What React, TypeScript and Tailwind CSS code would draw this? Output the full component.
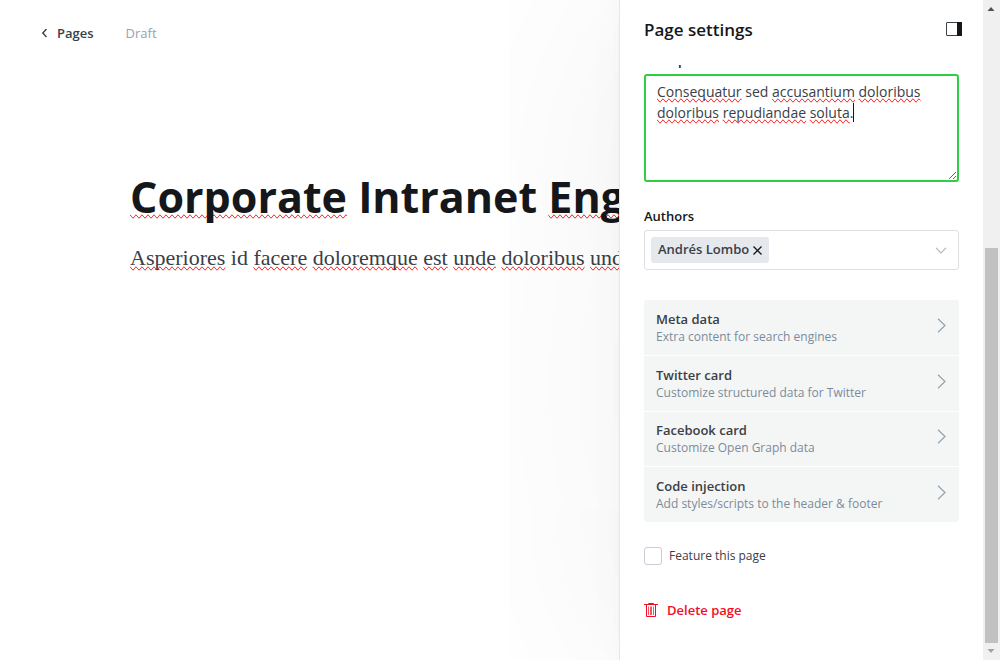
import { useState } from 'react';
import type { ReactNode } from 'react';

const cards = [
  { title: 'Meta data', text: 'Extra content for search engines' },
  { title: 'Twitter card', text: 'Customize structured data for Twitter' },
  { title: 'Facebook card', text: 'Customize Open Graph data' },
  { title: 'Code injection', text: 'Add styles/scripts to the header & footer' },
];

function Misspelt({ children }: { children: ReactNode }) {
  return <span className="[text-decoration-line:spelling-error]">{children}</span>;
}

function Marked({ text, known }: { text: string; known: string[] }) {
  return (
    <>
      {text.split(' ').map((word, i) => (
        <span key={i}>
          {i > 0 && ' '}
          {known.includes(word) ? word : <Misspelt>{word.replace('.', '')}</Misspelt>}
          {!known.includes(word) && word.endsWith('.') && '.'}
        </span>
      ))}
    </>
  );
}

function Scrollbar() {
  return (
    <div aria-hidden="true" className="flex w-[17px] shrink-0 flex-col items-center bg-[#f0f0f0] pr-px">
      <svg className="h-[17px] w-4" viewBox="0 0 16 17">
        <path d="M4.500 11 L8 7 L11.500 11 Z" fill="#505050" />
      </svg>
      <div className="flex w-full flex-1 flex-col pl-px">
        <div className="flex-[231]" />
        <div className="ml-px w-[13px] flex-[395] bg-[#c1c1c1]" />
      </div>
      <svg className="h-[17px] w-4" viewBox="0 0 16 17">
        <path d="M4.500 6 L8 10 L11.500 6 Z" fill="#a3a3a3" />
      </svg>
    </div>
  );
}

export default function App() {
  const [excerpt, setExcerpt] = useState('Consequatur sed accusantium doloribus doloribus repudiandae soluta.');
  const [featured, setFeatured] = useState(false);

  return (
    <div className="flex h-screen overflow-hidden bg-white font-['Open_Sans',sans-serif] text-[#394047]">
      <main className="min-w-0 flex-1 overflow-hidden whitespace-nowrap">
        <header className="flex h-[67px] items-center pl-10 text-[13px]">
          <a href="#pages" className="flex items-center gap-2 font-semibold">
            <svg className="h-[9px] w-[9px]" viewBox="0 0 9 9" fill="none" stroke="#394047" strokeWidth="1.4">
              <path d="M6.500 0 L2.800 4 L6.500 8" />
            </svg>
            Pages
          </a>
          <span className="ml-8 text-[#95a1ad]">Draft</span>
        </header>
        <div className="pt-[101px] pl-[130px]">
          <h1 className="text-[43px] leading-[58px] font-bold text-[#15171a]">
            <Marked text="Corporate Intranet Eng" known={['Intranet']} />
          </h1>
          <p className="mt-4 font-['Liberation_Serif',serif] text-[22px] leading-8">
            <Marked text="Asperiores id facere doloremque est unde doloribus unde" known={['id']} />
          </p>
        </div>
      </main>

      <aside className="z-10 flex w-[381px] shrink-0 border-l border-[#e5e6e8] bg-white shadow-[0_0_12px_rgba(0,0,0,0.02),0_0_50px_rgba(0,0,0,0.02),0_0_240px_rgba(0,0,0,0.065)]">
        <div className="flex min-w-0 flex-1 flex-col pr-6 pl-6">
          <div className="flex h-[65px] shrink-0 items-start justify-between pt-[17px]">
            <h2 className="text-[17px] leading-[26px] font-semibold text-[#15171a]">Page settings</h2>
            <button type="button" aria-label="Toggle settings" className="mt-[5px] -mr-[3px]">
              <svg className="h-[14px] w-4" viewBox="0 0 16 14">
                <rect x="0.500" y="0.500" width="15" height="13" rx="0.500" fill="none" stroke="#394047" />
                <rect x="11" y="0" width="5" height="14" rx="0.500" fill="#15171a" />
              </svg>
            </button>
          </div>
          <div className="min-h-0 flex-1 overflow-hidden">
            <form className="-mt-[15px]">
              <label htmlFor="excerpt" className="block h-6 text-[13px] leading-5 font-semibold text-[#15171a]">
                Excerpt
              </label>
              <div className="grid h-[108px]">
                <div
                  aria-hidden="true"
                  className="col-start-1 row-start-1 border-2 border-transparent px-[11px] py-[5px] text-[14px] leading-[21px] text-transparent"
                >
                  <Marked text={excerpt} known={['sed', '']} />
                  <span className="border-r border-[#15171a]" />
                </div>
                <textarea
                  id="excerpt"
                  spellCheck={false}
                  value={excerpt}
                  onChange={(e) => setExcerpt(e.target.value)}
                  className="col-start-1 row-start-1 resize rounded-[3px] border-2 border-[#30cf43] bg-transparent px-[11px] py-[5px] text-[14px] leading-[21px] outline-none"
                />
              </div>

              <div id="authors" className="mt-6 text-[13px] leading-5 font-semibold text-[#15171a]">
                Authors
              </div>
              <div
                role="group"
                aria-labelledby="authors"
                className="mt-1 flex h-10 items-center justify-between rounded-[3px] border border-[#dddfe2] pr-[11px] pl-[6px]"
              >
                <span className="flex h-[26px] items-center gap-1 rounded-[3px] bg-[#e5e9ed] px-[7px] text-[13px] font-semibold">
                  Andrés Lombo
                  <button type="button" aria-label="Remove Andrés Lombo">
                    <svg className="h-[9px] w-[9px]" viewBox="0 0 9 9" stroke="#15171a" strokeWidth="1.300">
                      <path d="M0.500 0.500 L8.500 8.500 M8.500 0.500 L0.500 8.500" />
                    </svg>
                  </button>
                </span>
                <button type="button" aria-label="Choose authors">
                  <svg className="h-[7px] w-3" viewBox="0 0 12 7" fill="none" stroke="#aeb7c1" strokeWidth="1.200">
                    <path d="M1 0.800 L6 5.800 L11 0.800" />
                  </svg>
                </button>
              </div>

              <div className="mt-[30px] flex h-[222px] flex-col gap-px overflow-hidden rounded-[3px]">
                {cards.map((card) => (
                  <button
                    key={card.title}
                    type="button"
                    className="flex flex-1 items-center justify-between bg-[#f4f6f6] pt-px pr-[13px] pl-3 text-left"
                  >
                    <span>
                      <span className="block text-[13px] leading-[18px] font-semibold">{card.title}</span>
                      <span className="block text-[12px] leading-[18px] text-[#7c8b9a]">{card.text}</span>
                    </span>
                    <svg className="mb-[5px] h-[15px] w-[9px]" viewBox="0 0 9 15" fill="none" stroke="#95a1ad" strokeWidth="1.200">
                      <path d="M1 0.800 L8 7.500 L1 14.200" />
                    </svg>
                  </button>
                ))}
              </div>

              <label className="mt-6 flex items-center gap-[7px] text-[12px] leading-5">
                <input
                  type="checkbox"
                  checked={featured}
                  onChange={(e) => setFeatured(e.target.checked)}
                  className="h-[18px] w-[18px] appearance-none rounded-[3px] border border-[#c8ced5] checked:bg-[#30cf43]"
                />
                Feature this page
              </label>

              <button type="button" className="mt-[34px] flex items-center gap-[9px] text-[13px] leading-5 font-semibold text-[#f50b23]">
                <svg className="h-[14px] w-[14px]" viewBox="0 0 14 14" fill="none" stroke="#f50b23">
                  <path d="M0 1.500 H14 M4.500 1.500 V0.500 H9.500 V1.500 M2.500 1.500 V13.500 H11.500 V1.500" />
                  <path d="M4.500 3.500 V12 M6.500 3.500 V12 M7.500 3.500 V12 M9.500 3.500 V12" strokeWidth="0.700" />
                </svg>
                Delete page
              </button>
            </form>
          </div>
        </div>
        <Scrollbar />
      </aside>
    </div>
  );
}
